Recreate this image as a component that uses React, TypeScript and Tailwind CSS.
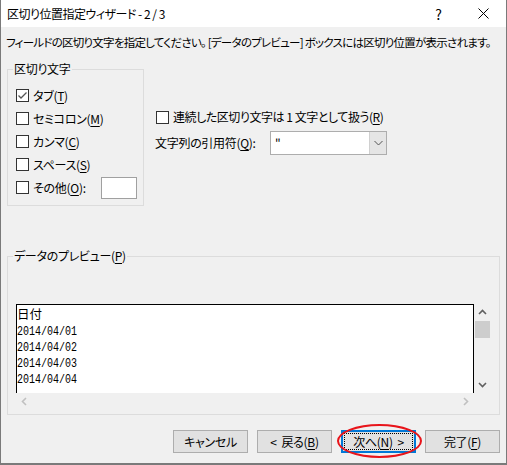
import React from "react";

const U = ({ children }: { children: React.ReactNode }) => (
  <span className="underline underline-offset-[2px] decoration-1">{children}</span>
);

const Check = ({ checked = false }: { checked?: boolean }) => (
  <div className="w-[13px] h-[13px] shrink-0 border border-[#333333] bg-white flex items-center justify-center">
    {checked && (
      <svg width="11" height="11" viewBox="0 0 11 11">
        <polyline points="1.5,5.5 4,8 9.5,2.5" fill="none" stroke="#555555" strokeWidth="1.3" />
      </svg>
    )}
  </div>
);

const Chevron = ({ dir, color }: { dir: "up" | "down" | "left" | "right"; color: string }) => {
  const pts: Record<string, string> = {
    up: "1,6 4.5,2.5 8,6",
    down: "1,3 4.5,6.5 8,3",
    left: "6,1 2.5,4.5 6,8",
    right: "3,1 6.5,4.5 3,8",
  };
  return (
    <svg width="9" height="9" viewBox="0 0 9 9">
      <polyline points={pts[dir]} fill="none" stroke={color} strokeWidth="1.6" />
    </svg>
  );
};

const Btn = ({ children, focused = false }: { children: React.ReactNode; focused?: boolean }) => (
  <div
    className={
      "relative w-[75px] h-[23px] flex items-center justify-center bg-[#e1e1e1] " +
      (focused ? "border-2 border-[#0078d7]" : "border border-[#adadad]")
    }
  >
    {focused && (
      <div className="absolute inset-[1px] border border-dotted border-black pointer-events-none" />
    )}
    <span className="relative whitespace-pre">{children}</span>
    {focused && (
      <div className="absolute left-[-6px] top-[-8px] w-[85px] h-[34px] rounded-[50%] border-2 border-[#e8141a] pointer-events-none" />
    )}
  </div>
);

const mono = '"Liberation Mono", monospace';

export default function App() {
  const rows = [
    { label: <>タブ(<U>T</U>)</>, checked: true },
    { label: <>セミコロン(<U>M</U>)</> },
    { label: <>カンマ(<U>C</U>)</> },
    { label: <>スペース(<U>S</U>)</> },
  ];
  return (
    <div
      className="w-[507px] h-[465px] flex flex-col bg-[#f0f0f0] border-x border-b-2 border-[#7a7a7a] text-[12px] leading-[16px] tracking-[-0.3px] text-black overflow-hidden [font-feature-settings:'palt']"
      style={{ fontFamily: '"Noto Sans CJK JP", "Noto Sans", sans-serif' }}
    >
      {/* Title bar */}
      <div className="h-[27px] shrink-0 bg-white flex items-center">
        <div className="pl-[6px] tracking-[-0.5px]">区切り位置指定ウィザード - 2 / 3</div>
        <div className="ml-auto flex h-full">
          <div className="w-[46px] h-full flex items-center justify-center text-[14px] pl-[3px]">?</div>
          <div className="w-[46px] h-full flex items-center justify-center">
            <svg width="11" height="11" viewBox="0 0 11 11">
              <path d="M0.5,0.5 L10.5,10.5 M10.5,0.5 L0.5,10.5" stroke="#000" strokeWidth="1" />
            </svg>
          </div>
        </div>
      </div>

      {/* Description */}
      <div className="mt-[7px] pl-[5px] whitespace-nowrap text-[11.5px] tracking-[-0.75px]">
        フィールドの区切り文字を指定してください。 [データのプレビュー] ボックスには区切り位置が表示されます。
      </div>

      {/* Middle */}
      <div className="mt-[19px] ml-[6px] flex">
        <div className="relative w-[137px] h-[137px] border border-[#dcdcdc] shrink-0">
          <div className="absolute left-[5px] top-[-9px] bg-[#f0f0f0] px-[1px]">区切り文字</div>
          <div className="pt-[14px] pl-[8px] flex flex-col">
            {rows.map((r, i) => (
              <div key={i} className="h-[23px] flex items-center gap-[4px]">
                <Check checked={r.checked} />
                <span>{r.label}</span>
              </div>
            ))}
            <div className="h-[23px] flex items-center">
              <Check />
              <span className="ml-[4px]">
                その他(<U>O</U>):
              </span>
              <div className="ml-auto mr-[6px] w-[36px] h-[22px] border border-[#a0a0a0] bg-white" />
            </div>
          </div>
        </div>

        <div className="ml-[11px] flex flex-col">
          <div className="mt-[40px] h-[16px] flex items-center">
            <div className="ml-[1px]">
              <Check />
            </div>
            <span className="ml-[4px] tracking-[-0.45px]">
              連続した区切り文字は 1 文字として扱う(<U>R</U>)
            </span>
          </div>
          <div className="mt-[6px] flex items-center">
            <div className="w-[115px]">
              文字列の引用符(<U>Q</U>):
            </div>
            <div className="w-[117px] h-[24px] border border-[#adadad] bg-white flex">
              <div className="flex-1 pl-[4px] flex items-center">"</div>
              <div className="w-[17px] h-full bg-[#e5e5e5] border-l border-[#d0d0d0] flex items-center justify-center">
                <svg width="9" height="6" viewBox="0 0 9 6">
                  <polyline points="0.5,1 4.5,5 8.5,1" fill="none" stroke="#555" strokeWidth="1" />
                </svg>
              </div>
            </div>
          </div>
        </div>
      </div>

      {/* Preview */}
      <div className="relative mt-[50px] ml-[6px] w-[493px] h-[159px] border border-[#dcdcdc] shrink-0">
        <div className="absolute left-[5px] top-[-9px] bg-[#f0f0f0] px-[1px]">
          データのプレビュー(<U>P</U>)
        </div>
        <div className="ml-[8px] mt-[47px] w-[475px] flex flex-col">
          <div className="flex">
            <div className="w-[458px] h-[89px] border-t border-l border-r border-black bg-white pt-[1px] overflow-hidden tracking-normal">
              <div className="h-[16px] leading-[16px] text-[12.5px]">日付</div>
              {["2014/04/01", "2014/04/02", "2014/04/03", "2014/04/04"].map((d) => (
                <div key={d} className="h-[16px] leading-[16px] text-[12.5px]">
                  <span className="inline-block origin-left scale-x-[0.8]" style={{ fontFamily: mono }}>
                    {d}
                  </span>
                </div>
              ))}
            </div>
            <div className="w-[17px] h-[89px] flex flex-col">
              <div className="h-[17px] flex items-center justify-center">
                <Chevron dir="up" color="#606060" />
              </div>
              <div className="ml-[1px] w-[15px] h-[17px] bg-[#cdcdcd]" />
              <div className="flex-1" />
              <div className="h-[17px] flex items-center justify-center">
                <Chevron dir="down" color="#606060" />
              </div>
            </div>
          </div>
          <div className="w-[458px] h-[17px] flex justify-between">
            <div className="w-[17px] h-full flex items-center justify-center">
              <Chevron dir="left" color="#c0c0c0" />
            </div>
            <div className="w-[17px] h-full flex items-center justify-center">
              <Chevron dir="right" color="#c0c0c0" />
            </div>
          </div>
        </div>
      </div>

      {/* Buttons */}
      <div className="mt-[15px] pr-[6px] flex justify-end gap-[9px]">
        <Btn>キャンセル</Btn>
        <Btn>
          &lt;{"  "}戻る(<U>B</U>)
        </Btn>
        <Btn focused>
          次へ(<U>N</U>){"  "}&gt;
        </Btn>
        <Btn>
          完了(<U>F</U>)
        </Btn>
      </div>
    </div>
  );
}
